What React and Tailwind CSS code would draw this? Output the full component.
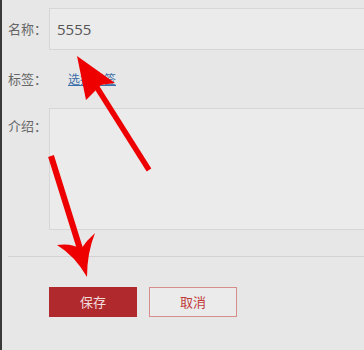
const font = { fontFamily: '"Noto Sans CJK SC", "Noto Sans", sans-serif' };

const Label = ({ children }) => (
  <div className="w-[49px] shrink-0 whitespace-nowrap pl-[8px] text-[13px] text-[#666]">{children}</div>
);

const Arrows = () => (
  <svg className="absolute inset-0 pointer-events-none" width="364" height="350" viewBox="0 0 364 350">
    <line x1="147" y1="170" x2="94" y2="86" stroke="#ee0000" strokeWidth="5.5" />
    <path d="M75 56 L113 83 L99 85 L84 100 Z" fill="#ee0000" />
    <line x1="49" y1="156" x2="79" y2="252" stroke="#ee0000" strokeWidth="6" />
    <path d="M85 277 Q73 256 55 245 Q70 243 79 249 Q85 240 93 233 Q85 253 85 277 Z" fill="#ee0000" />
  </svg>
);

export default function App() {
  return (
    <div
      className="relative h-[350px] w-[364px] overflow-hidden border-l-2 border-[#3a3a3a] bg-[#e7e7e7]"
      style={font}
    >
      <div className="flex flex-col pt-[8px] -ml-[2px]">
        <div className="flex h-[42px] items-center">
          <Label>名称：</Label>
          <div className="flex h-[42px] w-[330px] shrink-0 items-center border border-[#d6d6d6] bg-[#ebebeb] pl-[7px] font-['Open_Sans'] text-[15px] text-[#555]">
            5555
          </div>
        </div>
        <div className="flex h-[58px] items-center">
          <Label>标签：</Label>
          <a className="ml-[19px] text-[12px] text-[#3b6ea8] underline">选择标签</a>
        </div>
        <div className="flex">
          <div className="pt-[8px]">
            <Label>介绍：</Label>
          </div>
          <div className="h-[122px] w-[330px] shrink-0 border border-[#d6d6d6] bg-[#ebebeb]" />
        </div>
        <div className="ml-[8px] mt-[26px] border-t border-[#d2d2d2]" />
        <div className="ml-[49px] mt-[30px] flex gap-[12px]">
          <button className="h-[30px] w-[88px] bg-[#b02a2d] text-[13px] text-[#f3dede]">保存</button>
          <button className="h-[30px] w-[88px] border border-[#d88d8d] bg-[#ebebeb] text-[13px] text-[#c23b3b]">取消</button>
        </div>
      </div>
      <Arrows />
    </div>
  );
}
